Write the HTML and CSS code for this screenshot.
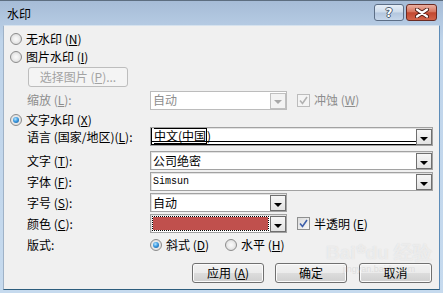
FILE: index.html
```html
<!DOCTYPE html>
<html>
<head>
<meta charset="utf-8">
<link rel="stylesheet" href="styles.css">
</head>
<body>
<div class="window">
  <div class="titlebar">
    <span class="title">水印</span>
    <div class="tbtns">
      <div class="tb help"><span>?</span></div>
      <div class="tb close">
        <svg width="14" height="10" viewBox="0 0 14 10"><path d="M2 1.5 L12 8.5 M12 1.5 L2 8.5" stroke="#4a1a12" stroke-width="4" stroke-linecap="round"/><path d="M2 1.5 L12 8.5 M12 1.5 L2 8.5" stroke="#fff" stroke-width="2.2" stroke-linecap="round"/></svg>
      </div>
    </div>
  </div>
  <div class="content">
    <div class="row r1"><span class="radio"></span><span class="rl">无水印 (<u>N</u>)</span></div>
    <div class="row r2"><span class="radio"></span><span class="rl">图片水印 (<u>I</u>)</span></div>
    <div class="row r3"><div class="pickbtn">选择图片 (<u>P</u>)...</div></div>
    <div class="row r4">
      <span class="lab dis">缩放 (<u>L</u>):</span>
      <div class="combo short disabled"><span class="val">自动</span><span class="dd"><i></i></span></div>
      <span class="check dischk"><svg width="9" height="9" viewBox="0 0 9 9"><path d="M1 4.5 L3.5 7.5 L8 1" fill="none" stroke="#b2b2b2" stroke-width="1.6"/></svg></span>
      <span class="cl dis">冲蚀 (<u>W</u>)</span>
    </div>
    <div class="row r5"><span class="radio on"></span><span class="rl">文字水印 (<u>X</u>)</span></div>
    <div class="row r6">
      <span class="lab">语言 (国家/地区)(<u>L</u>):</span>
      <div class="combo wide focus"><span class="val"><span class="sel">中文(中国</span>)</span><span class="dd"><i></i></span></div>
    </div>
    <div class="row r7">
      <span class="lab">文字 (<u>T</u>):</span>
      <div class="combo wide"><span class="val">公司绝密</span><span class="dd"><i></i></span></div>
    </div>
    <div class="row r8">
      <span class="lab">字体 (<u>F</u>):</span>
      <div class="combo wide"><span class="val mono">Simsun</span><span class="dd"><i></i></span></div>
    </div>
    <div class="row r9">
      <span class="lab">字号 (<u>S</u>):</span>
      <div class="combo short"><span class="val">自动</span><span class="dd"><i></i></span></div>
    </div>
    <div class="row r10">
      <span class="lab">颜色 (<u>C</u>):</span>
      <div class="combo short"><span class="swatch"><span class="red"></span></span><span class="dd"><i></i></span></div>
      <span class="check"><svg width="9" height="9" viewBox="0 0 9 9"><path d="M1 4.5 L3.5 7.5 L8 1" fill="none" stroke="#3d5faa" stroke-width="1.6"/></svg></span>
      <span class="cl">半透明 (<u>E</u>)</span>
    </div>
    <div class="row r11">
      <span class="lab">版式:</span>
      <span class="radio on"></span><span class="rl">斜式 (<u>D</u>)</span>
      <span class="radio second"></span><span class="rl">水平 (<u>H</u>)</span>
    </div>
    <div class="row r12">
      <div class="btn">应用 (<u>A</u>)</div>
      <div class="btn">确定</div>
      <div class="btn last">取消</div>
    </div>
  </div>
  <div class="wm">
    <span class="wm1">Bai<span class="paw">&#x2740;</span>du 经验</span>
    <span class="wm2">jingyan.baidu.com</span>
  </div>
</div>
</body>
</html>
```

FILE: styles.css
```css
html, body {
  margin: 0;
  padding: 0;
  background: #f0f0f0;
}
body {
  font-family: "Noto Sans CJK SC", "Noto Sans", sans-serif;
  font-size: 12px;
  color: #000;
  line-height: 1;
}
u { text-decoration: underline; text-underline-offset: 1px; }

.window {
  position: relative;
  width: 443px;
  height: 293px;
  box-sizing: border-box;
  background: linear-gradient(#a6bcd7, #bfd4ea 40px, #c6daee);
  border-top: 1px solid #5d6e80;
  padding: 0 3px 3px 3px;
  display: flex;
  flex-direction: column;
  overflow: hidden;
}

.titlebar {
  height: 24px;
  margin: 0 -3px;
  display: flex;
  justify-content: space-between;
  align-items: flex-start;
  flex-shrink: 0;
}
.title {
  margin: 7px 0 0 7px;
  font-size: 12px;
  color: #000;
}
.tbtns {
  display: flex;
  gap: 2px;
  margin: 3px 6px 0 0;
}
.tb {
  height: 17px;
  box-sizing: border-box;
  border-radius: 3px;
  display: flex;
  align-items: center;
  justify-content: center;
}
.help {
  width: 30px;
  border: 1px solid #5c6e86;
  background: linear-gradient(#e6eef7, #cddbeb 48%, #b3c6de 52%, #c5d6ea);
}
.help span {
  font-family: "DejaVu Sans", sans-serif;
  font-weight: bold;
  font-size: 12px;
  color: #fff;
  text-shadow: 1px 0 0 #4a5a6e, -1px 0 0 #4a5a6e, 0 1px 0 #4a5a6e, 0 -1px 0 #4a5a6e;
}
.close {
  width: 31px;
  border: 1px solid #6a2a22;
  background: linear-gradient(#eab0a2, #d7765f 45%, #c24830 52%, #d2644a);
}

.content {
  flex: 1;
  background: #f0f0f0;
  border-left: 1px solid #9fb2c7;
  border-right: 1px solid #5d8cb8;
  border-bottom: 1px solid #2d5d7d;
  border-top: 1px solid #d6e2ee;
  padding: 4px 7px 0 6px;
  display: flex;
  flex-direction: column;
}

.row {
  display: flex;
  align-items: center;
}
.r1 { height: 17px; }
.r2 { height: 17px; margin-top: 1px; }
.r3 { height: 20px; margin-top: 2px; padding-left: 18px; }
.r4 { height: 18px; margin-top: 4px; }
.r5 { height: 14px; margin-top: 4px; }
.r6 { height: 19px; }
.r7 { height: 19px; margin-top: 5px; }
.r8 { height: 19px; margin-top: 2px; }
.r9 { height: 19px; margin-top: 2px; }
.r10 { height: 19px; margin-top: 2px; }
.r11 { height: 16px; margin-top: 4px; }
.r12 { height: 20px; margin-top: 10px; justify-content: flex-end; }

.radio {
  width: 12px;
  height: 12px;
  box-sizing: border-box;
  border-radius: 50%;
  border: 1px solid #8c8c8c;
  background: radial-gradient(circle at 50% 50%, #fafafa 0, #f0f0f0 35%, #d2d2d2 100%);
  display: flex;
  align-items: center;
  justify-content: center;
  flex-shrink: 0;
}
.radio.on::after {
  content: "";
  width: 6px;
  height: 6px;
  border-radius: 50%;
  background: radial-gradient(circle at 40% 35%, #b8e6ff 0, #3c9ae0 45%, #10508f 100%);
}
.rl { margin-left: 4px; white-space: nowrap; }
.radio.second { margin-left: 16px; }

.lab {
  width: 123px;
  margin-left: 17px;
  white-space: nowrap;
  flex-shrink: 0;
}
.dis { color: #8d8d8d; }

.pickbtn {
  width: 100px;
  height: 20px;
  box-sizing: border-box;
  border: 1px solid #bdbdbd;
  border-radius: 3px;
  background: #f4f4f4;
  color: #a3a3a3;
  display: flex;
  align-items: center;
  justify-content: center;
}

.combo {
  height: 19px;
  box-sizing: border-box;
  border: 1px solid #a2a2a2;
  box-shadow: inset 1px 1px 0 #e2e2e2;
  background: #fff;
  display: flex;
  align-items: stretch;
  flex-shrink: 0;
}
.combo.wide { width: 283px; }
.combo.short { width: 137px; }
.combo .val {
  flex: 1;
  display: flex;
  align-items: center;
  padding-left: 2px;
  white-space: nowrap;
}
.combo .mono {
  font-family: "Liberation Mono", monospace;
  font-size: 10px;
}
.dd {
  width: 16px;
  box-sizing: border-box;
  margin: 1px 0 0 0;
  border: 1px solid #6f6f6f;
  background: linear-gradient(#f6f6f6, #e2e2e2);
  display: flex;
  align-items: center;
  justify-content: center;
}
.dd i {
  width: 0;
  height: 0;
  margin-top: 3px;
  border-left: 4px solid transparent;
  border-right: 4px solid transparent;
  border-top: 4px solid #000;
}
.combo.disabled {
  border-color: #bcbcbc;
  box-shadow: none;
  color: #8d8d8d;
}
.combo.disabled .dd {
  border-color: #c0c0c0;
  background: #f3f3f3;
}
.combo.disabled .dd i { border-top-color: #a8a8a8; }

.combo.focus .val {
  border-left: 1px solid #000;
  border-bottom: 1px solid #000;
  box-shadow: inset 0 -2px 0 #fff, inset 0 -3px 0 #000;
  padding-left: 2px;
}
.sel {
  border: 1px solid #000;
  border-left: none;
  padding: 1px 0;
}

.swatch {
  flex: 1;
  padding: 1px;
  display: flex;
}
.swatch .red {
  flex: 1;
  background: #c0504d;
  outline: 1px dotted #000;
  outline-offset: 0;
  margin: 1px;
}

.check {
  width: 13px;
  height: 13px;
  box-sizing: border-box;
  margin-left: 10px;
  border: 1px solid #8e8f8f;
  background: linear-gradient(135deg, #dcdcdc, #f8f8f8);
  display: flex;
  align-items: center;
  justify-content: center;
  flex-shrink: 0;
}
.check.dischk {
  border-color: #bcbcbc;
  background: #f4f4f4;
}
.cl { margin-left: 4px; white-space: nowrap; }

.btn {
  width: 72px;
  height: 20px;
  box-sizing: border-box;
  border: 1px solid #707070;
  border-radius: 3px;
  background: linear-gradient(#f2f2f2, #ebebeb 50%, #dddddd 50%, #cfcfcf);
  box-shadow: inset 0 0 0 1px #fbfbfb;
  display: flex;
  align-items: center;
  justify-content: center;
  margin-left: 11px;
}
.btn.last { width: 73px; margin-left: 12px; }

.wm {
  position: absolute;
  left: 326px;
  top: 242px;
  display: flex;
  flex-direction: column;
  align-items: center;
  pointer-events: none;
}
.wm1 {
  font-family: "Liberation Sans", sans-serif;
  font-weight: bold;
  font-size: 19px;
  color: rgba(255, 255, 255, 0.55);
  text-shadow: 0 0 1px rgba(160, 160, 160, 0.35);
}
.paw {
  font-size: 12px;
  vertical-align: top;
}
.wm2 {
  font-family: "Liberation Sans", sans-serif;
  font-size: 9px;
  color: rgba(200, 200, 200, 0.45);
  margin-top: 3px;
}
```
